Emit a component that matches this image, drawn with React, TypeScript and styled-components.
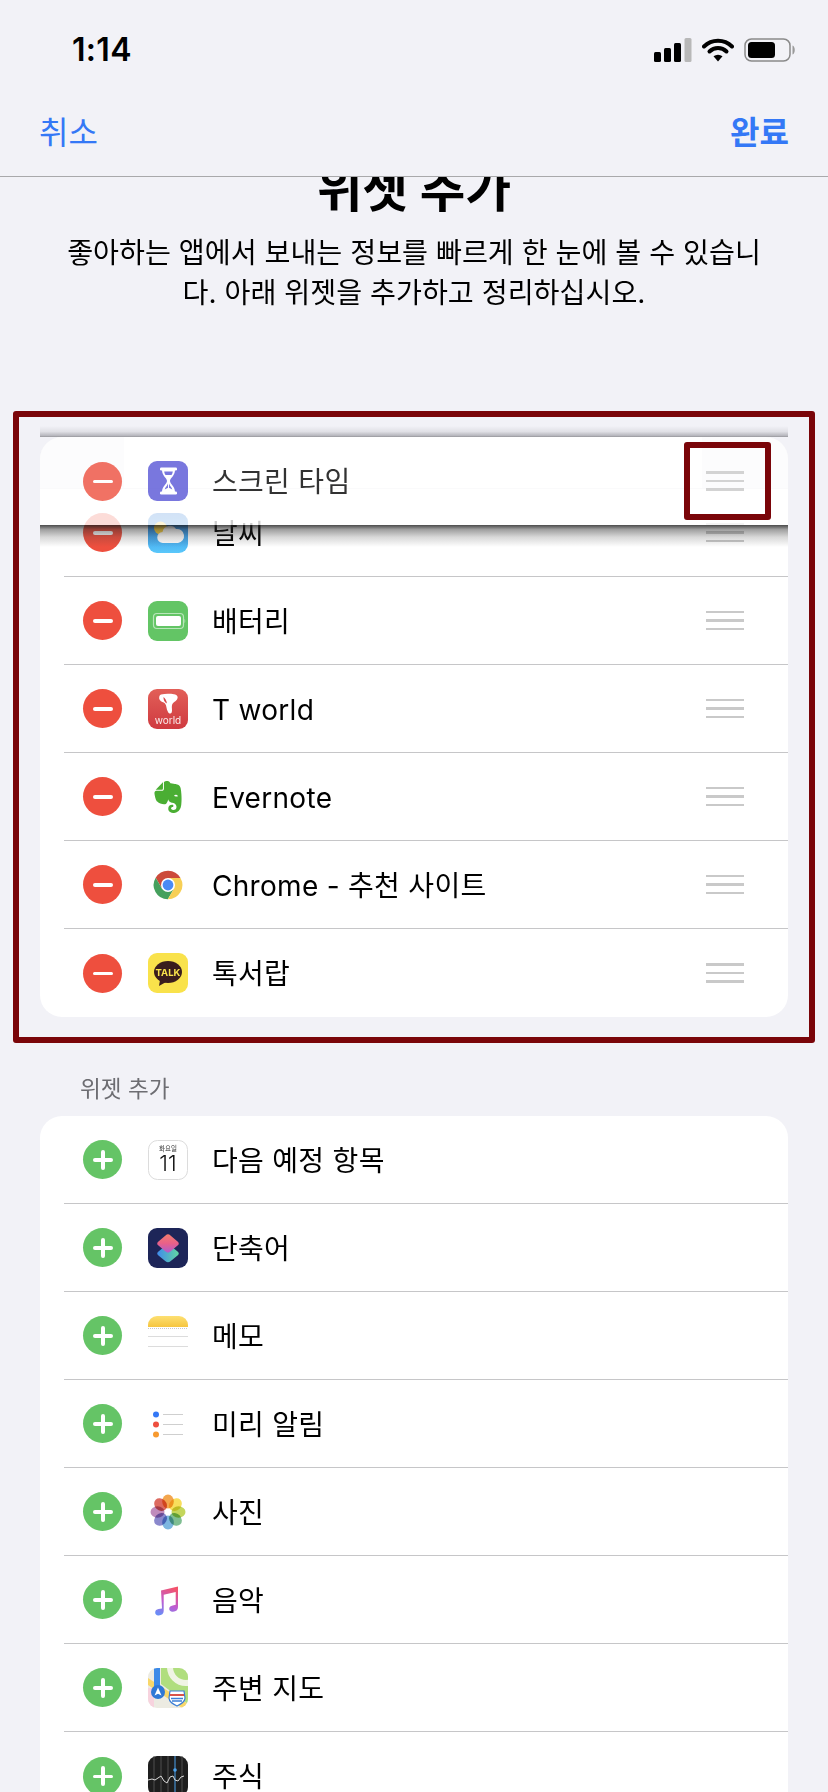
import React from 'react'
import styled, { createGlobalStyle } from 'styled-components'
import { SiEvernote } from 'react-icons/si'

const FONT = `Inter, "Noto Sans CJK KR", sans-serif`
const BG = '#f2f2f7'
const MARK = '#7a0509'
const SEP = '#c6c6c8'

const GlobalStyle = createGlobalStyle`
  html, body { margin: 0; padding: 0; background: ${BG}; }
  body { font-family: ${FONT}; color: #000; }
`

const Page = styled.div`
  width: 828px;
  height: 1792px;
  overflow: hidden;
  background: ${BG};
`

const Header = styled.header`
  position: relative;
  z-index: 2;
  height: 177px;
  box-sizing: border-box;
  background: ${BG};
  border-bottom: 1px solid #a9a9ab;
`

const StatusBar = styled.div`
  height: 99px;
  display: flex;
  align-items: center;
  justify-content: space-between;
  padding: 0 31px 0 72px;
`

const Time = styled.span`
  font-size: 32px;
  font-weight: 600;
  letter-spacing: 0.3px;
`

const StatusIcons = styled.div`
  display: flex;
  align-items: center;
  gap: 10px;
`

const Nav = styled.nav`
  height: 61px;
  display: flex;
  align-items: center;
  justify-content: space-between;
  padding: 0 39px;
`

const NavButton = styled.span<{ $done?: boolean }>`
  font-size: 32px;
  color: #3478f6;
  font-weight: ${({ $done }) => ($done ? 600 : 400)};
`

const Intro = styled.section`
  margin-top: -18px;
  height: 252px;
  text-align: center;
`

const Title = styled.h1`
  margin: 0;
  font-size: 49.5px;
  line-height: 60px;
  font-weight: 700;
`

const Desc = styled.p`
  margin: 14px auto 0;
  width: 710px;
  font-size: 28.2px;
  line-height: 40px;
  word-break: break-all;
`

const MarkedGroup = styled.div`
  margin: 0 13px;
  padding: 20px 21px;
  border: 6px solid ${MARK};
  border-radius: 3px;
`

const Card = styled.div`
  position: relative;
  margin: 0;
  background: #fff;
  border-radius: 22px;
`

const Slot = styled.div`
  height: 51px;
  display: flex;
  justify-content: space-between;
  border-bottom: 1px solid #e6e6e8;
`

const SlotPatch = styled.div<{ $side: 'left' | 'right' }>`
  width: ${({ $side }) => ($side === 'left' ? '84px' : '86px')};
  background: #efeff2;
  border-radius: ${({ $side }) => ($side === 'left' ? '22px 0 0 0' : '0 22px 0 0')};
`

const Row = styled.div`
  height: 88px;
  box-sizing: border-box;
  margin-left: 24px;
  padding: 0 44px 0 19px;
  display: flex;
  align-items: center;
  border-bottom: 1px solid ${SEP};
  &:last-child { border-bottom: none; }
`

const DragRow = styled.div`
  position: absolute;
  z-index: 1;
  top: 0;
  left: 0;
  right: 0;
  height: 88px;
  border-radius: 22px 22px 0 0;
  background: rgba(255, 255, 255, 0.8);
  &::before {
    content: '';
    position: absolute;
    left: 0;
    right: 0;
    top: -11px;
    height: 11px;
    background: linear-gradient(rgba(70, 70, 80, 0), rgba(70, 70, 80, 0.1) 50%, rgba(60, 60, 70, 0.34) 90%, rgba(50, 50, 55, 0.5));
  }
  &::after {
    content: '';
    position: absolute;
    left: 0;
    right: 0;
    bottom: -22px;
    height: 22px;
    background: linear-gradient(rgba(30, 30, 30, 0.8), rgba(40, 40, 40, 0.45) 20%, rgba(60, 60, 60, 0.2) 55%, rgba(60, 60, 60, 0));
  }
`

const DragContent = styled.div`
  height: 88px;
  box-sizing: border-box;
  padding: 0 44px 0 43px;
  display: flex;
  align-items: center;
  opacity: 0.8;
`

const HandleMark = styled.div`
  position: absolute;
  top: 5px;
  right: 17px;
  width: 87px;
  height: 78px;
  box-sizing: border-box;
  border: 6px solid ${MARK};
  border-radius: 3px;
`

const RoundButton = styled.span<{ $add?: boolean }>`
  position: relative;
  flex: none;
  width: 39px;
  height: 39px;
  border-radius: 50%;
  background: ${({ $add }) => ($add ? '#65c466' : '#ee4f3e')};
  &::before {
    content: '';
    position: absolute;
    left: 9.5px;
    top: 18px;
    width: 20px;
    height: 3.5px;
    border-radius: 2px;
    background: #fff;
  }
  ${({ $add }) => $add && `
    &::after {
      content: '';
      position: absolute;
      left: 18px;
      top: 9.5px;
      width: 3.5px;
      height: 20px;
      border-radius: 2px;
      background: #fff;
    }
  `}
`

const IconBox = styled.span`
  flex: none;
  width: 40px;
  height: 40px;
  margin: 0 24px 0 26px;
  display: flex;
  align-items: center;
  justify-content: center;
  svg { display: block; }
`

const Label = styled.span`
  font-size: 28px;
  line-height: 40px;
  letter-spacing: 0.3px;
  white-space: nowrap;
  margin-top: 2px;
`

const Handle = styled.span`
  margin-left: auto;
  width: 38px;
  display: flex;
  flex-direction: column;
  gap: 6px;
  i {
    display: block;
    height: 2.6px;
    background: #c9c9c9;
  }
`

const SectionLabel = styled.div`
  height: 73px;
  box-sizing: border-box;
  padding: 29px 0 0 80px;
  font-size: 22.6px;
  line-height: 34px;
  color: #6d6d72;
`

const AddCard = styled(Card)`
  margin: 0 40px;
`

const Petal = styled.ellipse`
  mix-blend-mode: multiply;
`

const SvgText = styled.text`
  font-family: ${FONT};
`

const Svg = ({ children }: { children: React.ReactNode }) => (
  <svg width="40" height="40" viewBox="0 0 40 40">{children}</svg>
)

const ScreenTimeIcon = () => (
  <Svg>
    <rect width="40" height="40" rx="9" fill="#5856d6" />
    <rect x="12" y="6.500" width="17" height="3" rx="1.300" fill="#fff" />
    <rect x="12" y="30.500" width="17" height="3" rx="1.300" fill="#fff" />
    <path d="M14 9h13c0 6-5 8-5 11s5 5 5 11H14c0-6 5-8 5-11s-5-5-5-11z" fill="#fff" />
    <path d="M16.200 10.500h8.600c-.2 1.500-.7 2.500-1.300 3.500h-6c-.6-1-1.100-2-1.300-3.500z" fill="#5856d6" />
    <path d="M20 22.500v4.300l-3.300 1.700c.6-2.500 2.700-3.800 3.300-6zM21 22.500v4.300l3.300 1.700c-.6-2.500-2.700-3.800-3.300-6z" fill="#5856d6" />
  </Svg>
)

const WeatherIcon = () => (
  <Svg>
    <defs>
      <linearGradient id="wx" x1="0" y1="0" x2="0" y2="1">
        <stop offset="0" stopColor="#1f6fd2" />
        <stop offset="1" stopColor="#5ac8fb" />
      </linearGradient>
    </defs>
    <rect width="40" height="40" rx="9" fill="url(#wx)" />
    <circle cx="12.500" cy="15" r="6.500" fill="#f8cf3e" />
    <path d="M15 30a5.500 5.500 0 0 1-.5-11 7.500 7.500 0 0 1 13.500-3 7 7 0 0 1 2 14z" fill="#fff" />
  </Svg>
)

const BatteryAppIcon = () => (
  <Svg>
    <rect width="40" height="40" rx="9" fill="#63c565" />
    <rect x="5.500" y="12.500" width="30" height="15" rx="3.500" fill="none" stroke="#b9e6ba" strokeWidth="1.200" />
    <rect x="8" y="15" width="25" height="10" rx="2" fill="#fff" />
    <path d="M36.500 18v4c1-.3 1-3.700 0-4z" fill="#b9e6ba" />
  </Svg>
)

const TWorldIcon = () => (
  <Svg>
    <defs>
      <linearGradient id="tw" x1="0" y1="0" x2="0" y2="1">
        <stop offset="0" stopColor="#e25f58" />
        <stop offset="1" stopColor="#cf3a40" />
      </linearGradient>
    </defs>
    <rect width="40" height="40" rx="9" fill="url(#tw)" />
    <path d="M13 5.500c4-.8 9-.8 13-.2 3.500.6 4.500 3 3 5.200-1.500 2.300-4.200 2.800-5 5.500-.6 2.500.6 5.500-.3 7.500-.8 1.600-2.700 1.300-3.700-.5-1.800-3-1.200-6.500-3-8.500-1.500-1.600-3.800-1.500-5.200-3.500-1.300-2-.6-4.800 1.200-5.500z" fill="#fff" />
    <path d="M15.500 8c1.800 1.400 3.200 3.600 3.400 6.400-2.100-1-3.700-3.400-3.400-6.400z" fill="#d8474a" />
    <SvgText x="20" y="34.500" fontSize="10" fill="#fff" fillOpacity="0.9" textAnchor="middle">world</SvgText>
  </Svg>
)

const ChromeIcon = () => (
  <Svg>
    <path d="M20 13H32.500A14.300 14.300 0 0 0 7.690 12.670L13.940 23.500Z" fill="#cc4a3a" />
    <path d="M13.940 23.500L7.690 12.670A14.300 14.300 0 0 0 19.810 34.330L26.060 23.500Z" fill="#45a05d" />
    <path d="M26.060 23.500L19.810 34.330A14.300 14.300 0 0 0 32.500 13H20Z" fill="#f7cf55" />
    <circle cx="20" cy="20" r="7" fill="#fff" />
    <circle cx="20" cy="20" r="5.400" fill="#4a8af4" />
  </Svg>
)

const KakaoIcon = () => (
  <Svg>
    <rect width="40" height="40" rx="9" fill="#f9e24b" />
    <ellipse cx="20" cy="19" rx="14" ry="11" fill="#3a1d1d" />
    <path d="M12 27l-1 6 7-4z" fill="#3a1d1d" />
    <SvgText x="20" y="22.500" fontSize="9.500" fontWeight="700" fill="#f9e24b" textAnchor="middle">TALK</SvgText>
  </Svg>
)

const CalendarIcon = () => (
  <Svg>
    <rect x=".5" y=".5" width="39" height="39" rx="9" fill="#fff" stroke="#dcdcdc" />
    <SvgText x="20" y="10.500" fontSize="6.500" fill="#333" textAnchor="middle">화요일</SvgText>
    <SvgText x="20" y="31" fontSize="22" fontWeight="300" fill="#111" textAnchor="middle">11</SvgText>
  </Svg>
)

const ShortcutsIcon = () => (
  <Svg>
    <defs>
      <linearGradient id="sc1" x1="1" y1="1" x2="0" y2="0">
        <stop offset="0" stopColor="#a85cd8" />
        <stop offset="0.500" stopColor="#e8608a" />
        <stop offset="1" stopColor="#f4806a" />
      </linearGradient>
      <linearGradient id="sc2" x1="1" y1="0" x2="0" y2="1">
        <stop offset="0" stopColor="#64dc9e" />
        <stop offset="1" stopColor="#3e86f0" />
      </linearGradient>
    </defs>
    <rect width="40" height="40" rx="9" fill="#1d2558" />
    <rect x="-8.500" y="-8.500" width="17" height="17" rx="3.500" fill="url(#sc2)" transform="translate(20 25.500) scale(1 .82) rotate(45)" />
    <rect x="-8.500" y="-8.500" width="17" height="17" rx="3.500" fill="url(#sc1)" transform="translate(20 15.500) scale(1 .85) rotate(45)" />
  </Svg>
)

const NotesIcon = () => (
  <Svg>
    <defs>
      <linearGradient id="nt" x1="0" y1="0" x2="0" y2="1">
        <stop offset="0" stopColor="#fde072" />
        <stop offset="1" stopColor="#f6c53f" />
      </linearGradient>
    </defs>
    <path d="M0 11V9a9 9 0 0 1 9-9h22a9 9 0 0 1 9 9v2z" fill="url(#nt)" />
    <path d="M0 12.500h40" stroke="#c8c8c8" strokeWidth="1" strokeDasharray="1 1" />
    <path d="M0 20.500h40M0 30.500h40" stroke="#dcdcdc" strokeWidth="1" />
  </Svg>
)

const RemindersIcon = () => (
  <Svg>
    <circle cx="8" cy="10.500" r="3" fill="#3478f6" />
    <circle cx="8" cy="20.500" r="3" fill="#ee4f3e" />
    <circle cx="8" cy="30.500" r="3" fill="#f79a2f" />
    <path d="M15 10.500h20M15 20.500h20M15 30.500h20" stroke="#cfcfcf" strokeWidth="1" />
  </Svg>
)

const PETALS = ['#f3a64e', '#f8de5c', '#c4d65c', '#7fbe92', '#7db6e0', '#8a88cc', '#c08cbc', '#dc6a60']

const PhotosIcon = () => (
  <Svg>
    {PETALS.map((c, i) => (
      <Petal key={c} cx="20" cy="9.500" rx="5.800" ry="7" fill={c} transform={`rotate(${i * 45} 20 20)`} />
    ))}
  </Svg>
)

const MusicIcon = () => (
  <Svg>
    <defs>
      <linearGradient id="mu" x1="0.700" y1="0" x2="0.300" y2="1">
        <stop offset="0" stopColor="#f4536a" />
        <stop offset="0.550" stopColor="#c05cd0" />
        <stop offset="1" stopColor="#6a8cf6" />
      </linearGradient>
    </defs>
    <path d="M13 10.500L30 6.500V27c0 3-2 4.500-5 4.800-2.500.2-3.800-1.300-3.800-3 0-2 1.500-3 3.500-3.400l3-.6V12l-12 2.800V31c0 2.800-2 4.300-5 4.500-2.300.2-3.500-1.300-3.500-3 0-2 1.400-3 3.300-3.400l3.500-.7z" fill="url(#mu)" />
  </Svg>
)

const MapsIcon = () => (
  <Svg>
    <defs>
      <clipPath id="mp"><rect width="40" height="40" rx="9" /></clipPath>
    </defs>
    <g clipPath="url(#mp)">
      <rect width="40" height="40" fill="#ecebe2" />
      <path d="M13 0h27v36L13 16z" fill="#b0de7e" />
      <circle cx="38" cy="-1" r="16" fill="none" stroke="#f0f4e4" strokeWidth="6" />
      <path d="M0 10L40 36V40H34L0 17z" fill="#f8d76a" />
      <rect y="20" width="6" height="20" fill="#f7d3de" />
      <rect x="6" width="6" height="24" fill="#3c8ae8" />
      <circle cx="10" cy="24" r="7" fill="#2f78d6" />
      <path d="M10 19.500l3.500 8-3.500-1.800-3.500 1.800z" fill="#fff" />
      <path d="M22 23h14l1 7c0 4-4 6-8 8-4-2-8-4-8-8z" fill="#fff" stroke="#3c7fd6" strokeWidth="1.200" />
      <rect x="22" y="26" width="14" height="2" fill="#d9534a" />
      <path d="M23 30.500h12M24 33h10" stroke="#3c7fd6" strokeWidth="1.500" />
    </g>
  </Svg>
)

const StocksIcon = () => (
  <Svg>
    <rect width="40" height="40" rx="9" fill="#1e1e1e" />
    <path d="M6 0v40M13 0v40M20 0v40M34 0v40" stroke="#5c5c5c" strokeWidth=".8" />
    <path d="M27 0v40" stroke="#4da3ee" strokeWidth="1" />
    <path d="M0 24l4-1 3 1 3-2 3-2 3 5 3 2 3-6 3-1 2 4 3 1 3-4 3-1" fill="none" stroke="#d8d8d8" strokeWidth="1" />
    <circle cx="27" cy="14" r="1.800" fill="#4da3ee" />
  </Svg>
)

const SignalIcon = () => (
  <svg width="38" height="24" viewBox="0 0 38 24">
    <rect x="0" y="14" width="7" height="10" rx="1.500" fill="#000" />
    <rect x="10" y="10" width="7" height="14" rx="1.500" fill="#000" />
    <rect x="20" y="5" width="7" height="19" rx="1.500" fill="#000" />
    <rect x="30.500" y="0" width="7" height="24" rx="1.500" fill="#b8b8b8" />
  </svg>
)

const WifiIcon = () => (
  <svg width="32" height="24" viewBox="0 0 32 24">
    <path d="M2 8.500A20 20 0 0 1 30 8.500" fill="none" stroke="#000" strokeWidth="4" strokeLinecap="round" />
    <path d="M7.500 13.500A12 12 0 0 1 24.500 13.500" fill="none" stroke="#000" strokeWidth="4" strokeLinecap="round" />
    <path d="M16 23.500L11.500 18.300A7 7 0 0 1 20.500 18.300Z" fill="#000" />
  </svg>
)

const BatteryIcon = () => (
  <svg width="53" height="24" viewBox="0 0 53 24">
    <rect x="1" y="1" width="45" height="22" rx="6.500" fill="none" stroke="#8a8a8a" strokeWidth="1.500" />
    <rect x="4" y="4" width="27" height="16" rx="3.500" fill="#000" />
    <path d="M48.500 7.500v9c3-.8 3-8.200 0-9z" fill="#9a9a9a" />
  </svg>
)

const activeRows = [
  { name: '날씨', icon: <WeatherIcon /> },
  { name: '배터리', icon: <BatteryAppIcon /> },
  { name: 'T world', icon: <TWorldIcon /> },
  { name: 'Evernote', icon: <SiEvernote size={32} color="#4aae33" /> },
  { name: 'Chrome - 추천 사이트', icon: <ChromeIcon /> },
  { name: '톡서랍', icon: <KakaoIcon /> },
]

const addRows = [
  { name: '다음 예정 항목', icon: <CalendarIcon /> },
  { name: '단축어', icon: <ShortcutsIcon /> },
  { name: '메모', icon: <NotesIcon /> },
  { name: '미리 알림', icon: <RemindersIcon /> },
  { name: '사진', icon: <PhotosIcon /> },
  { name: '음악', icon: <MusicIcon /> },
  { name: '주변 지도', icon: <MapsIcon /> },
  { name: '주식', icon: <StocksIcon /> },
]

const Lines = () => (
  <Handle><i /><i /><i /></Handle>
)

export default function App() {
  return (
    <Page>
      <GlobalStyle />
      <Header>
        <StatusBar>
          <Time>1:14</Time>
          <StatusIcons>
            <SignalIcon />
            <WifiIcon />
            <BatteryIcon />
          </StatusIcons>
        </StatusBar>
        <Nav>
          <NavButton>취소</NavButton>
          <NavButton $done>완료</NavButton>
        </Nav>
      </Header>
      <Intro>
        <Title>위젯 추가</Title>
        <Desc>좋아하는 앱에서 보내는 정보를 빠르게 한 눈에 볼 수 있습니다. 아래 위젯을 추가하고 정리하십시오.</Desc>
      </Intro>
      <MarkedGroup>
        <Card>
          <DragRow>
            <DragContent>
              <RoundButton />
              <IconBox><ScreenTimeIcon /></IconBox>
              <Label>스크린 타임</Label>
              <Lines />
            </DragContent>
            <HandleMark />
          </DragRow>
          <Slot>
            <SlotPatch $side="left" />
            <SlotPatch $side="right" />
          </Slot>
          {activeRows.map(r => (
            <Row key={r.name}>
              <RoundButton />
              <IconBox>{r.icon}</IconBox>
              <Label>{r.name}</Label>
              <Lines />
            </Row>
          ))}
        </Card>
      </MarkedGroup>
      <SectionLabel>위젯 추가</SectionLabel>
      <AddCard>
        {addRows.map(r => (
          <Row key={r.name}>
            <RoundButton $add />
            <IconBox>{r.icon}</IconBox>
            <Label>{r.name}</Label>
          </Row>
        ))}
      </AddCard>
    </Page>
  )
}
